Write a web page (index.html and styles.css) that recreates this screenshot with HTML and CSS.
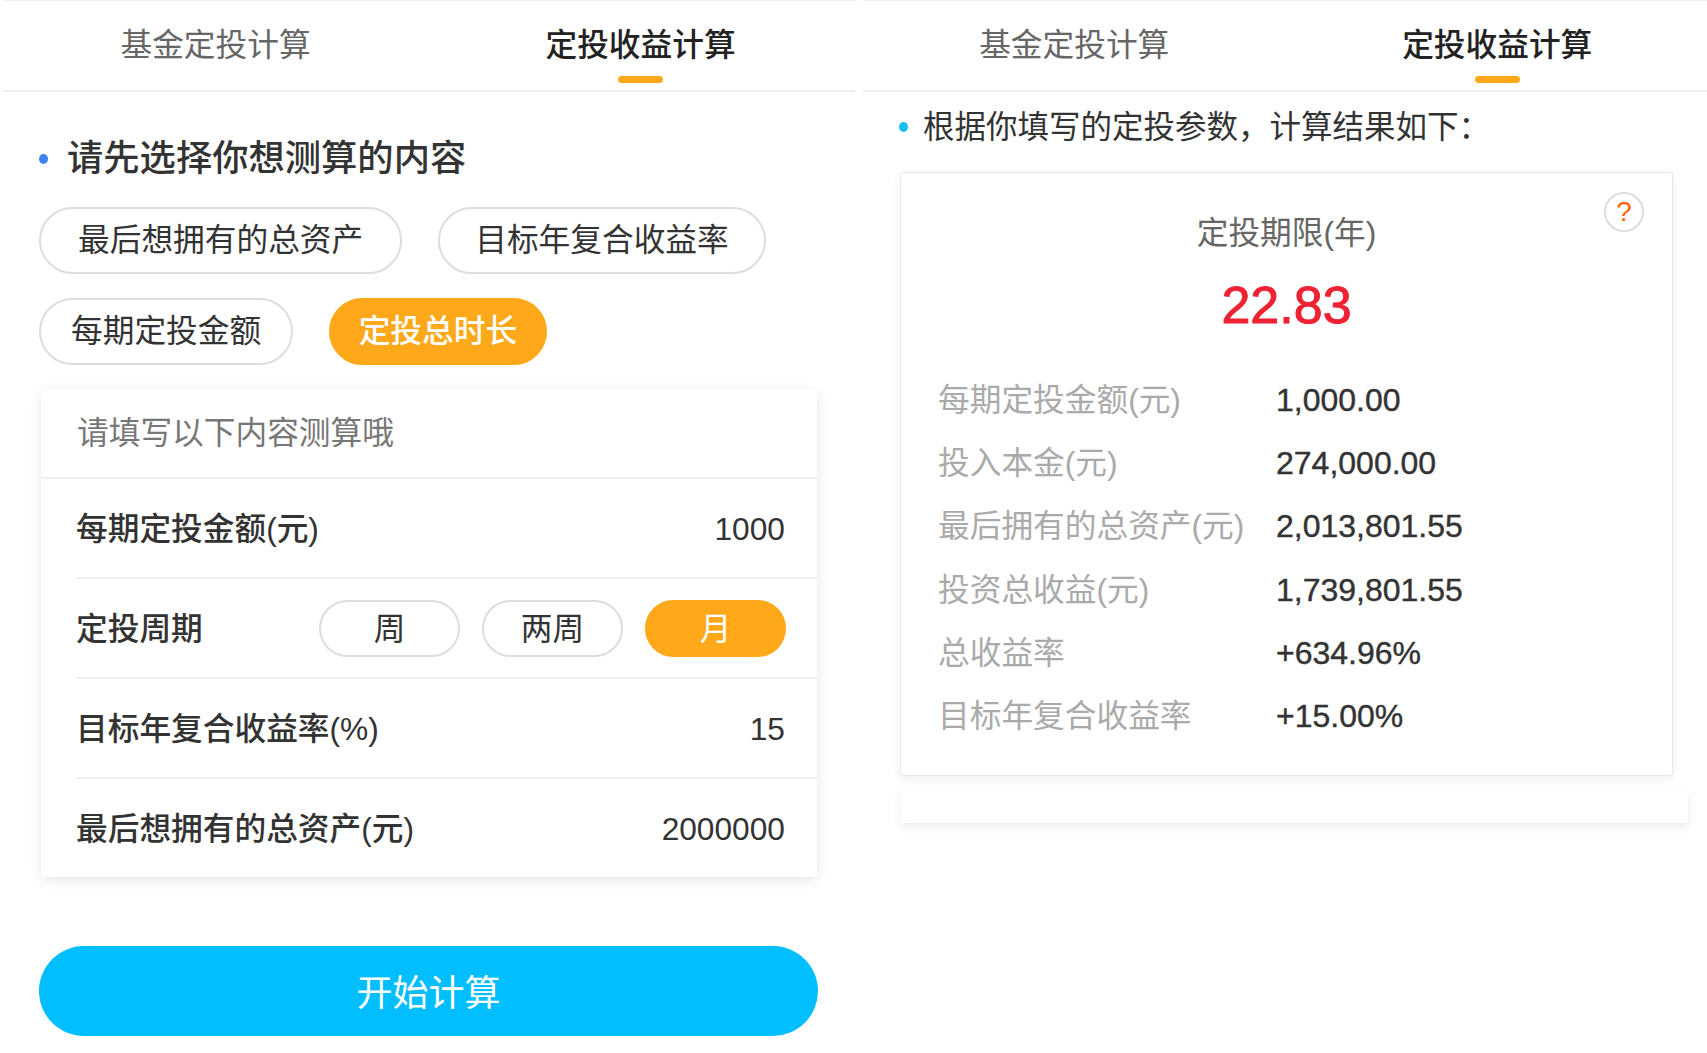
FILE: index.html
```html
<!DOCTYPE html>
<html lang="zh-CN">
<head>
    <meta charset="UTF-8">
    <meta name="viewport" content="width=device-width, initial-scale=1.0">
    <title>定投收益计算</title>
    <link rel="stylesheet" href="styles.css">
</head>
<body>
    <div class="screens">
        <!-- 左屏:填写参数 -->
        <section class="screen screen-form">
            <div class="tabs">
                <div class="tab">基金定投计算</div>
                <div class="tab active">定投收益计算</div>
            </div>

            <h2 class="title"><span class="dot"></span>请先选择你想测算的内容</h2>

            <div class="choices">
                <div class="pill">最后想拥有的总资产</div>
                <div class="pill">目标年复合收益率</div>
                <div class="pill">每期定投金额</div>
                <div class="pill on">定投总时长</div>
            </div>

            <div class="card">
                <div class="card-head">请填写以下内容测算哦</div>
                <div class="row">
                    <span class="row-label">每期定投金额(元)</span>
                    <span class="row-value">1000</span>
                </div>
                <div class="row">
                    <span class="row-label">定投周期</span>
                    <div class="cycle">
                        <div class="cycle-item">周</div>
                        <div class="cycle-item">两周</div>
                        <div class="cycle-item on">月</div>
                    </div>
                </div>
                <div class="row">
                    <span class="row-label">目标年复合收益率(%)</span>
                    <span class="row-value">15</span>
                </div>
                <div class="row last">
                    <span class="row-label">最后想拥有的总资产(元)</span>
                    <span class="row-value">2000000</span>
                </div>
            </div>

            <button class="start">开始计算</button>
        </section>

        <!-- 右屏:计算结果 -->
        <section class="screen screen-result">
            <div class="tabs">
                <div class="tab">基金定投计算</div>
                <div class="tab active">定投收益计算</div>
            </div>

            <p class="intro"><span class="dot"></span>根据你填写的定投参数，计算结果如下：</p>

            <div class="result">
                <div class="help">?</div>
                <div class="result-label">定投期限(年)</div>
                <div class="result-value">22.83</div>
                <div class="stats">
                    <span class="stat-label">每期定投金额(元)</span><span class="stat-value">1,000.00</span>
                    <span class="stat-label">投入本金(元)</span><span class="stat-value">274,000.00</span>
                    <span class="stat-label">最后拥有的总资产(元)</span><span class="stat-value">2,013,801.55</span>
                    <span class="stat-label">投资总收益(元)</span><span class="stat-value">1,739,801.55</span>
                    <span class="stat-label">总收益率</span><span class="stat-value">+634.96%</span>
                    <span class="stat-label">目标年复合收益率</span><span class="stat-value">+15.00%</span>
                </div>
            </div>
            <div class="result-under"></div>
        </section>
    </div>
</body>
</html>
```

FILE: styles.css
```css
* {
    margin: 0;
    padding: 0;
    box-sizing: border-box;
}

body {
    font-family: "Liberation Sans", "Noto Sans CJK SC", sans-serif;
    font-size: 31.7px;
    color: #333;
    background-color: #fff;
    overflow: hidden;
}

.screens {
    display: flex;
    width: 1707px;
    height: 1053px;
}

.screen {
    flex: none;
    height: 100%;
}

.screen-form {
    width: 860px;
}

.screen-result {
    width: 847px;
}

/* 顶部标签 */
.tabs {
    display: flex;
    height: 92px;
    border-top: 1px solid #eee;
    border-bottom: 2px solid #efefef;
}

.screen-form .tabs {
    margin: 0 5px 0 3px;
}

.screen-result .tabs {
    margin-left: 3px;
}

.tab {
    width: 425px;
    padding-top: 24px;
    line-height: 40px;
    text-align: center;
    color: #666;
}

.screen-result .tab:first-child {
    width: 432px;
    margin-left: -2px;
}

.tab.active {
    color: #222;
    font-weight: 500;
}

.tab.active::after {
    content: "";
    display: block;
    width: 45px;
    height: 7px;
    margin: 11px auto 0;
    border-radius: 4px;
    background-color: #ffa91a;
}

.dot {
    flex: none;
    width: 9px;
    height: 10px;
    border-radius: 50%;
}

/* 左屏 */
.title {
    display: flex;
    align-items: center;
    gap: 19px;
    margin: 45px 0 0 39px;
    font-size: 36.3px;
    line-height: 44px;
    font-weight: 500;
    color: #333;
}

.title .dot {
    background-color: #3f80f5;
}

.choices {
    display: flex;
    flex-wrap: wrap;
    gap: 24px 36px;
    width: 760px;
    margin: 26px 0 0 39px;
}

.pill {
    height: 67px;
    padding: 0 37px;
    line-height: 63px;
    border: 2px solid #ddd;
    border-radius: 34px;
}

.pill:nth-child(2) {
    padding: 0 35px;
}

.pill:nth-child(3) {
    padding: 0 30px;
}

.pill.on {
    padding: 0 27.5px;
    color: #fff;
    font-weight: 500;
    border-color: #ffa91a;
    background-color: #ffa91a;
}

.card {
    width: 776px;
    height: 488px;
    margin: 24px 0 0 41px;
    border-radius: 4px;
    background-color: #fff;
    box-shadow: 0 3px 12px rgba(60, 70, 110, 0.14);
}

.card-head {
    height: 90px;
    padding-left: 36px;
    line-height: 88px;
    color: #777;
    border-bottom: 2px solid #f0f0f0;
}

.row {
    display: flex;
    align-items: center;
    justify-content: space-between;
    height: 100px;
    margin-left: 35px;
    padding-right: 31px;
    border-bottom: 2px solid #f1f1f1;
}

.row.last {
    height: 98px;
    border-bottom: none;
}

.row-label {
    padding-bottom: 5px;
    font-weight: 500;
    color: #333;
}

.row-value {
    margin-right: 1px;
    padding-top: 2px;
}

.cycle {
    display: flex;
    gap: 22px;
}

.cycle-item {
    width: 141px;
    height: 57px;
    line-height: 54px;
    text-align: center;
    border: 2px solid #ddd;
    border-radius: 29px;
}

.cycle-item.on {
    color: #fff;
    border-color: #ffa91a;
    background-color: #ffa91a;
}

.start {
    display: block;
    width: 779px;
    height: 90px;
    margin: 69px 0 0 39px;
    padding-bottom: 3px;
    border: none;
    border-radius: 45px;
    background-color: #00beff;
    color: #fff;
    font-family: inherit;
    font-size: 36px;
}

/* 右屏 */
.intro {
    display: flex;
    align-items: center;
    gap: 15px;
    margin: 13px 0 0 39px;
    font-size: 31.5px;
    line-height: 44px;
    color: #333;
}

.intro .dot {
    background-color: #19bef5;
}

.result {
    position: relative;
    width: 773px;
    height: 604px;
    margin: 23px 0 0 40px;
    padding: 40px 0 0 37px;
    border: 1px solid #e8e8e8;
    border-radius: 3px;
    background-color: #fff;
    box-shadow: 0 3px 10px rgba(60, 60, 60, 0.08);
}

.help {
    position: absolute;
    top: 19px;
    right: 28px;
    width: 40px;
    height: 40px;
    line-height: 36px;
    font-size: 28px;
    text-align: center;
    color: #f60;
    border: 2px solid #ddd;
    border-radius: 50%;
}

.result-label {
    margin-left: -37px;
    line-height: 40px;
    text-align: center;
    color: #666;
}

.result-value {
    margin: 22px 0 0 -37px;
    font-size: 52px;
    line-height: 60px;
    font-weight: 500;
    text-align: center;
    color: #ee2233;
    -webkit-text-stroke: 1px #ee2233;
}

.stats {
    display: grid;
    grid-template-columns: 338px auto;
    grid-auto-rows: 63.2px;
    align-items: center;
    margin-top: 33px;
}

.stat-label {
    padding-bottom: 5px;
    color: #aaa;
}

.stat-value {
    padding-top: 2px;
    font-size: 32px;
    color: #333;
    -webkit-text-stroke: 0.4px #333;
}

.result-under {
    width: 787px;
    height: 32px;
    margin: 15px 0 0 41px;
    background-color: #fff;
    box-shadow: 0 4px 10px rgba(60, 60, 60, 0.1);
}
```
